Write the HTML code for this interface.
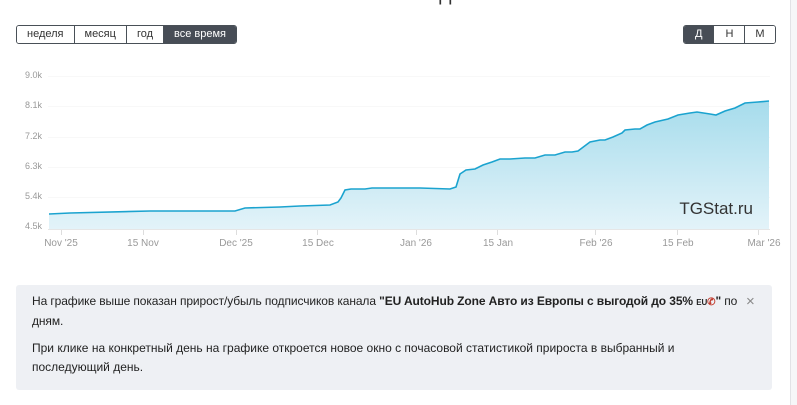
<!DOCTYPE html>
<html><head><meta charset="utf-8"><style>
body{margin:0;width:797px;height:405px;overflow:hidden;background:#fff;font-family:"Liberation Sans",sans-serif;position:relative}
.title{position:absolute;left:0;width:790px;text-align:center;top:-18px;font-size:21px;color:#333}
.bg{position:absolute;top:25px;height:17px;display:flex;border:1px solid #495057;border-radius:3px;overflow:hidden}
.bg span{font-size:11px;color:#333;line-height:17px;padding:0 10px;border-left:1px solid #495057;background:#fff}
.bg span:first-child{border-left:none}
.bg span.a{background:#474d56;color:#fff}
.yl{position:absolute;left:25px;font-size:9px;color:#999;width:17px;text-align:right}
.xl{position:absolute;top:238px;font-size:10px;color:#999;transform:translateX(-50%);white-space:nowrap}
.box{position:absolute;left:16px;top:285px;width:756px;height:105px;background:#eef0f4;border-radius:3px;font-size:12px;color:#222;line-height:19px}
.sb{position:absolute;left:790px;top:0;width:7px;height:405px;background:#f6f6f8;border-left:1px solid #e2e2e6}
</style></head><body>
<div class="title">Рост количества подписчиков</div>
<div class="bg" style="left:16px"><span>неделя</span><span>месяц</span><span>год</span><span class="a">все время</span></div>
<div class="bg" style="left:683px"><span class="a" style="padding:0 11px">Д</span><span style="padding:0 11px">Н</span><span style="padding:0 10px">М</span></div>
<svg style="position:absolute;left:0;top:0" width="790" height="260">
<defs><linearGradient id="g" x1="0" y1="0" x2="0" y2="1"><stop offset="0" stop-color="#a6dcec"/><stop offset="1" stop-color="#e3f3f9"/></linearGradient></defs>
<g stroke="#f8f8f8" stroke-width="1"><line x1="48" y1="76.5" x2="770" y2="76.5"/><line x1="48" y1="106.5" x2="770" y2="106.5"/><line x1="48" y1="137.5" x2="770" y2="137.5"/><line x1="48" y1="167.5" x2="770" y2="167.5"/><line x1="48" y1="197.5" x2="770" y2="197.5"/></g>
<path fill="url(#g)" d="M49,214 L70,213 150,211 235,211 245,208 280,207 300,206 330,205 338,202 341,198 345,190 351,189 365,189 372,188 420,188 450,189 456,187 460,174 466,170 475,169 483,165 492,162 500,159 510,159 525,158 535,158 545,155 555,155 565,152 572,152 578,151 582,148 590,142 600,140 605,140 613,137 622,133 625,130 635,129 640,129 647,125 655,122 668,119 678,115 690,113 697,112 710,114 716,115 725,111 735,108 745,103 758,102 769,101 L769,229 L49,229Z"/>
<path fill="none" stroke="#1ba3cf" stroke-width="1.6" d="M49,214 L70,213 150,211 235,211 245,208 280,207 300,206 330,205 338,202 341,198 345,190 351,189 365,189 372,188 420,188 450,189 456,187 460,174 466,170 475,169 483,165 492,162 500,159 510,159 525,158 535,158 545,155 555,155 565,152 572,152 578,151 582,148 590,142 600,140 605,140 613,137 622,133 625,130 635,129 640,129 647,125 655,122 668,119 678,115 690,113 697,112 710,114 716,115 725,111 735,108 745,103 758,102 769,101"/>
<line x1="48" y1="229.5" x2="770" y2="229.5" stroke="#e6e6e6"/>
<g stroke="#ddd"><line x1="61.5" y1="230" x2="61.5" y2="235"/><line x1="143.5" y1="230" x2="143.5" y2="235"/><line x1="236.5" y1="230" x2="236.5" y2="235"/><line x1="317.5" y1="230" x2="317.5" y2="235"/><line x1="416.5" y1="230" x2="416.5" y2="235"/><line x1="497.5" y1="230" x2="497.5" y2="235"/><line x1="595.5" y1="230" x2="595.5" y2="235"/><line x1="677.5" y1="230" x2="677.5" y2="235"/><line x1="758.5" y1="230" x2="758.5" y2="235"/></g>
<text x="753" y="214" text-anchor="end" font-family="Liberation Sans,sans-serif" font-size="17" fill="#333">TGStat.ru</text>
</svg>
<div class="yl" style="top:70px">9.0k</div><div class="yl" style="top:100px">8.1k</div><div class="yl" style="top:131px">7.2k</div><div class="yl" style="top:161px">6.3k</div><div class="yl" style="top:191px">5.4k</div><div class="yl" style="top:221px">4.5k</div>
<div class="xl" style="left:61px">Nov '25</div><div class="xl" style="left:143px">15 Nov</div><div class="xl" style="left:236px">Dec '25</div><div class="xl" style="left:318px">15 Dec</div><div class="xl" style="left:416px">Jan '26</div><div class="xl" style="left:498px">15 Jan</div><div class="xl" style="left:596px">Feb '26</div><div class="xl" style="left:678px">15 Feb</div><div class="xl" style="left:764px">Mar '26</div>
<div class="box">
<div style="position:absolute;left:16px;top:7px;width:710px;letter-spacing:-0.1px">На графике выше показан прирост/убыль подписчиков канала <b>"EU AutoHub Zone Авто из Европы с выгодой до 35% <span style="font-size:8px">EU</span><span style="color:#c0392b;font-size:10px">&#9990;</span>"</b> по дням.</div>
<div style="position:absolute;left:16px;top:54px;width:680px">При клике на конкретный день на графике откроется новое окно с почасовой статистикой прироста в выбранный и последующий день.</div>
<div style="position:absolute;left:730px;top:7px;color:#888;font-size:15px">×</div>
</div>
<div class="sb"></div>
</body></html>
